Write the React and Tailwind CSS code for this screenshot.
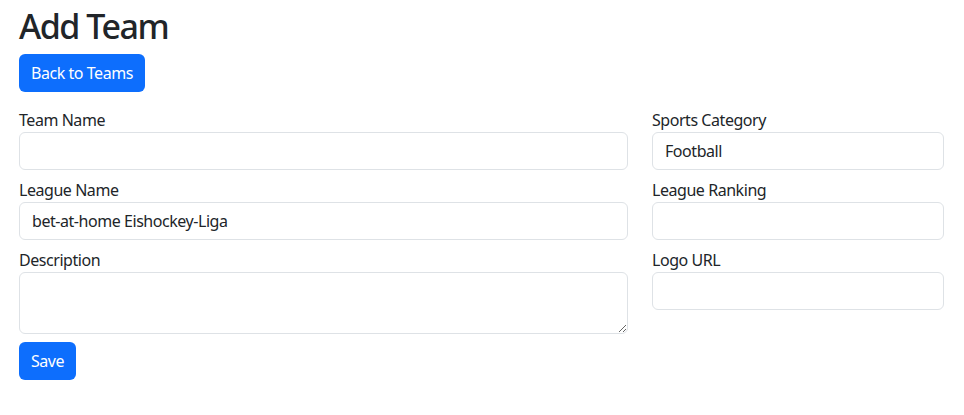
import React, { useState } from 'react';

const field = "block w-full h-[38px] px-3 py-1.5 bg-white border border-[#dee2e6] rounded-[6px] text-base leading-6 text-[#212529] outline-none";

const Field = ({ label, value, onChange }) => (
  <div className="mb-2">
    <label className="block leading-6">{label}</label>
    <input className={field} value={value} onChange={e => onChange(e.target.value)} />
  </div>
);

const App = () => {
  const [form, setForm] = useState({
    name: '',
    league: 'bet-at-home Eishockey-Liga',
    description: '',
    sport: 'Football',
    ranking: '',
    logo: '',
  });
  const set = key => v => setForm({ ...form, [key]: v });

  return (
    <div className="min-h-screen bg-white pl-[19px] pr-[20px] text-[#212529] tracking-[-0.45px]" style={{ fontFamily: '"Noto Sans", "Open Sans", sans-serif' }}>
      <h1 className="text-[34px] font-medium pt-[7px] leading-[39px] mb-2 tracking-[-1.5px]">Add Team</h1>
      <button className="h-[38px] px-3 bg-[#0d6efd] text-white rounded-[6px] leading-6 mb-4">Back to Teams</button>

      <form onSubmit={e => e.preventDefault()}>
        <div className="grid grid-cols-[609fr_292fr] gap-x-6">
          <div>
            <Field label="Team Name" value={form.name} onChange={set('name')} />
            <Field label="League Name" value={form.league} onChange={set('league')} />
            <div className="mb-2">
              <label className="block leading-6">Description</label>
              <textarea rows={2} className="block w-full h-[62px] px-3 py-1.5 bg-white border border-[#dee2e6] rounded-[6px] leading-6 outline-none"
                value={form.description} onChange={e => set('description')(e.target.value)} />
            </div>
          </div>
          <div>
            <Field label="Sports Category" value={form.sport} onChange={set('sport')} />
            <Field label="League Ranking" value={form.ranking} onChange={set('ranking')} />
            <Field label="Logo URL" value={form.logo} onChange={set('logo')} />
          </div>
        </div>
        <button type="submit" className="h-[38px] px-3 bg-[#0d6efd] text-white rounded-[6px] leading-6">Save</button>
      </form>
    </div>
  );
};

export default App;
